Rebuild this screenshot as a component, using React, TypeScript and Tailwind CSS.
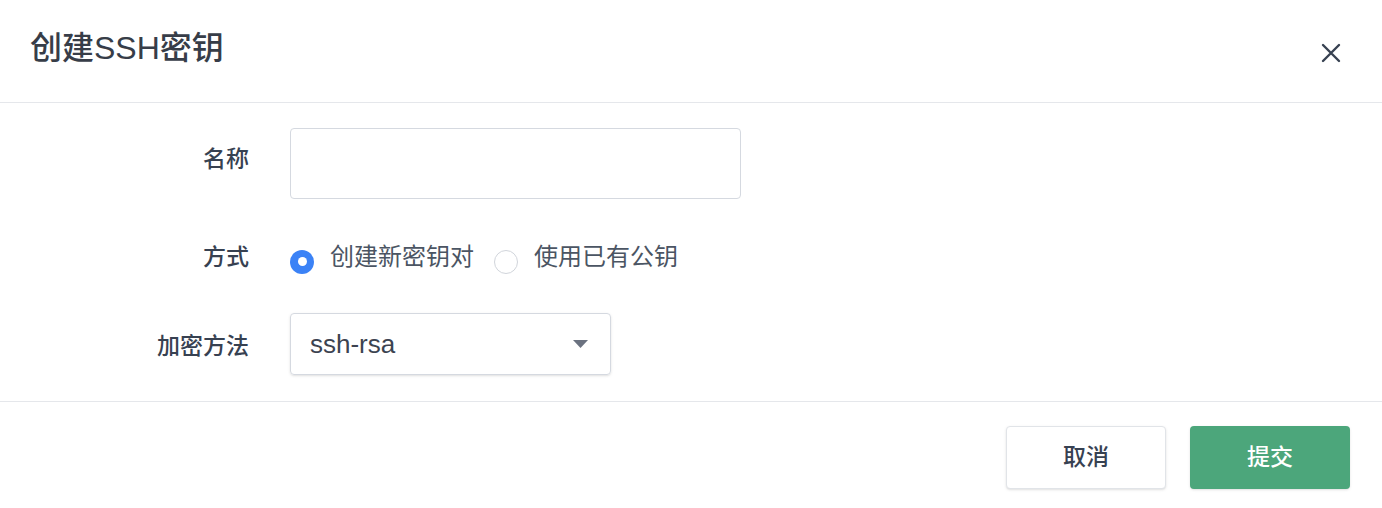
import { useState } from "react";

const FONT = {
  fontFamily: '"Liberation Sans", "Noto Sans CJK SC", sans-serif',
};

function Radio({
  checked,
  label,
  onClick,
}: {
  checked: boolean;
  label: string;
  onClick: () => void;
}) {
  return (
    <button
      type="button"
      onClick={onClick}
      className="flex items-center gap-[16px] text-[24px] text-[#4b5563]"
    >
      <span
        className={
          checked
            ? "mt-[9px] flex h-[24px] w-[24px] items-center justify-center rounded-full bg-[#3b82f6]"
            : "mt-[9px] flex h-[24px] w-[24px] items-center justify-center rounded-full border border-[#d1d5db] bg-white"
        }
      >
        {checked && <span className="h-[9px] w-[9px] rounded-full bg-white" />}
      </span>
      <span>{label}</span>
    </button>
  );
}

export default function App() {
  const [mode, setMode] = useState<"new" | "existing">("new");
  const [name, setName] = useState("");

  return (
    <div
      className="flex h-[508px] w-[1382px] flex-col bg-white text-[#374151]"
      style={FONT}
    >
      {/* header */}
      <div className="flex h-[103px] items-start justify-between border-b border-[#e5e7eb] pl-[30px] pr-[41px]">
        <h2 className="pt-[30px] text-[32px] font-medium leading-[36px] text-[#373d48]">
          创建SSH密钥
        </h2>
        <button type="button" className="mt-[43px] text-[#374151]">
          <svg width="20" height="20" viewBox="0 0 20 20" fill="none">
            <path
              d="M2 2L18 18M18 2L2 18"
              stroke="currentColor"
              strokeWidth="2.4"
              strokeLinecap="round"
            />
          </svg>
        </button>
      </div>

      {/* body */}
      <div className="flex flex-col border-b border-[#e5e7eb] pt-[25px] pb-[26px]">
        <div className="flex items-start">
          <label className="w-[249px] pt-[15px] text-right text-[23px] font-medium leading-[32px]">
            名称
          </label>
          <input
            value={name}
            onChange={(e) => setName(e.target.value)}
            className="ml-[41px] h-[71px] w-[451px] rounded-[4px] border border-[#d5d9e0] px-[18px] text-[22px] outline-none"
          />
        </div>

        <div className="mt-[38px] flex h-[40px] items-center">
          <label className="w-[249px] text-right text-[23px] font-medium leading-[32px]">
            方式
          </label>
          <div className="ml-[41px] flex items-center gap-[20px]">
            <Radio
              checked={mode === "new"}
              label="创建新密钥对"
              onClick={() => setMode("new")}
            />
            <Radio
              checked={mode === "existing"}
              label="使用已有公钥"
              onClick={() => setMode("existing")}
            />
          </div>
        </div>

        <div className="mt-[36px] flex items-center">
          <label className="w-[249px] pt-[4px] text-right text-[23px] font-medium leading-[32px]">
            加密方法
          </label>
          <div className="ml-[41px] flex h-[62px] w-[321px] items-center justify-between rounded-[4px] border border-[#d5d9e0] pl-[19px] pr-[22px] shadow-sm">
            <span className="text-[26px] text-[#3c4350]">ssh-rsa</span>
            <svg width="15" height="8" viewBox="0 0 15 8">
              <path d="M0 0H15L7.5 8Z" fill="#6b7280" />
            </svg>
          </div>
        </div>
      </div>

      {/* footer */}
      <div className="flex justify-end gap-[24px] pt-[24px] pr-[32px]">
        <button
          type="button"
          className="h-[63px] w-[160px] rounded-[4px] border border-[#e1e4e8] bg-white text-[23px] font-medium text-[#374151] shadow-sm"
        >
          取消
        </button>
        <button
          type="button"
          className="h-[63px] w-[160px] rounded-[4px] bg-[#4ca67b] text-[23px] font-medium text-white shadow-sm"
        >
          提交
        </button>
      </div>
    </div>
  );
}
